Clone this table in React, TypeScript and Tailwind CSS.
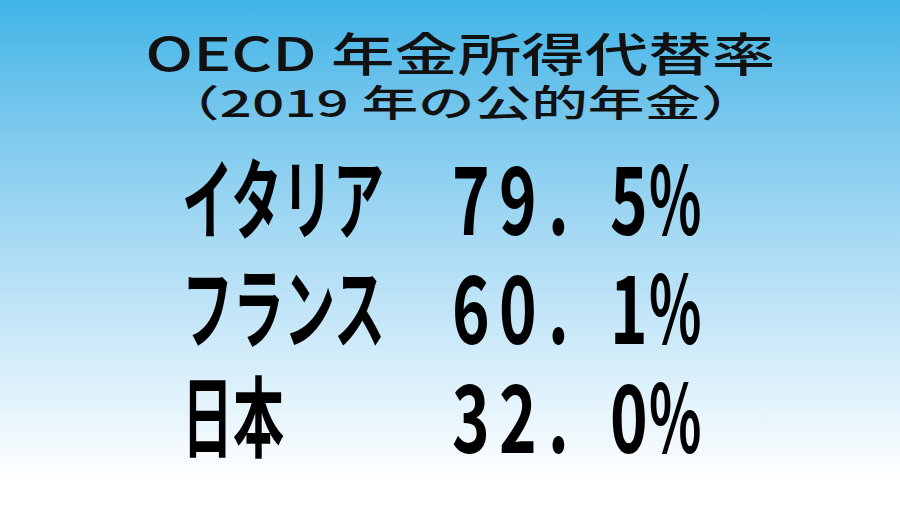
import React from "react";

type Row = { label: string; value: string[] };

const rows: Row[] = [
  { label: "イタリア", value: ["7", "9", ".", "5", "%"] },
  { label: "フランス", value: ["6", "0", ".", "1", "%"] },
  { label: "日本", value: ["3", "2", ".", "0", "%"] },
];

const font = { fontFamily: '"Noto Sans CJK JP", "Noto Sans", sans-serif' };

// widths of each value cell: digit, digit, dot, digit, percent
const cellW = ["w-[47px]", "w-[49px]", "w-[62px]", "w-[39px]", "w-[50px]"];

const Value = ({ chars }: { chars: string[] }) => (
  <div className="flex items-baseline text-[94px] font-bold leading-none text-black">
    {chars.map((c, i) => (
      <span key={i} className={`inline-block ${cellW[i]}`}>
        <span
          className={
            c === "%"
              ? "inline-block origin-left scale-x-[0.58]"
              : "inline-block origin-left scale-x-[0.68]"
          }
        >
          {c}
        </span>
      </span>
    ))}
  </div>
);

export default function App() {
  return (
    <div
      className="w-[900px] h-[507px] overflow-hidden bg-linear-to-b from-[#3cb4e6] to-white to-95%"
      style={font}
    >
      <div className="flex flex-col items-center pt-[22px] pl-5 text-[#111]">
        <div className="text-[46px] font-medium leading-[58px] scale-x-[1.38] whitespace-nowrap">
          OECD 年金所得代替率
        </div>
        <div className="text-[37px] font-medium leading-[42px] scale-x-[1.53] whitespace-nowrap">
          （2019 年の公的年金）
        </div>
      </div>

      <div className="flex flex-col pt-[17px] pl-[182px]">
        {rows.map((r) => (
          <div key={r.label} className="flex items-center h-[109px]">
            <div className="w-[270px] shrink-0">
              <span className="inline-block origin-left scale-x-[0.58] text-[88px] font-bold leading-none text-black whitespace-nowrap">
                {r.label}
              </span>
            </div>
            <Value chars={r.value} />
          </div>
        ))}
      </div>
    </div>
  );
}
